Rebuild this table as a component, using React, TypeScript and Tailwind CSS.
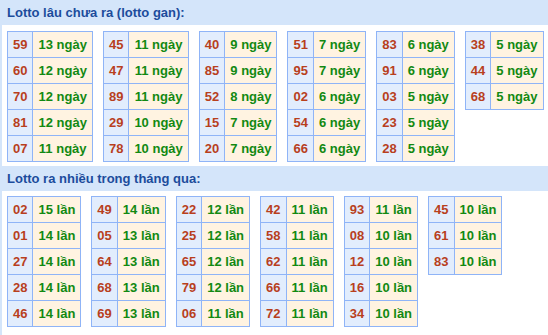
import React from 'react';

type Row = [string, string];

const ganTables: Row[][] = [
  [['59', '13'], ['60', '12'], ['70', '12'], ['81', '12'], ['07', '11']],
  [['45', '11'], ['47', '11'], ['89', '11'], ['29', '10'], ['78', '10']],
  [['40', '9'], ['85', '9'], ['52', '8'], ['15', '7'], ['20', '7']],
  [['51', '7'], ['95', '7'], ['02', '6'], ['54', '6'], ['66', '6']],
  [['83', '6'], ['91', '6'], ['03', '5'], ['23', '5'], ['28', '5']],
  [['38', '5'], ['44', '5'], ['68', '5']],
];

const hotTables: Row[][] = [
  [['02', '15'], ['01', '14'], ['27', '14'], ['28', '14'], ['46', '14']],
  [['49', '14'], ['05', '13'], ['64', '13'], ['68', '13'], ['69', '13']],
  [['22', '12'], ['25', '12'], ['65', '12'], ['79', '12'], ['06', '11']],
  [['42', '11'], ['58', '11'], ['62', '11'], ['66', '11'], ['72', '11']],
  [['93', '11'], ['08', '10'], ['12', '10'], ['16', '10'], ['34', '10']],
  [['45', '10'], ['61', '10'], ['83', '10']],
];

const StatTable: React.FC<{ rows: Row[]; unit: string }> = ({ rows, unit }) => (
  <div className="grid grid-cols-[auto_auto] border-l border-t border-[#8fb4f7]">
    {rows.map(([num, count], i) => (
      <React.Fragment key={i}>
        <div className="h-[26px] px-[5px] flex items-center justify-center border-r border-b border-[#8fb4f7] bg-[#e2edfd] text-[#b83f1d]">
          {num}
        </div>
        <div className="h-[26px] px-[5px] flex items-center justify-center border-r border-b border-[#8fb4f7] bg-[#fff3e1] text-[#128912]">
          {count} {unit}
        </div>
      </React.Fragment>
    ))}
  </div>
);

const Section: React.FC<{ title: string; tables: Row[][]; unit: string; top: string; bottom: string }> = ({
  title,
  tables,
  unit,
  top,
  bottom,
}) => (
  <div>
    <div className="h-[25px] pl-[5px] flex items-center bg-[#d4e5fa] text-[13px] font-bold text-[#1c4c9c]">
      {title}
    </div>
    <div className={`flex items-start gap-[10px] pl-[5px] ${top} ${bottom}`}>
      {tables.map((rows, i) => (
        <StatTable key={i} rows={rows} unit={unit} />
      ))}
    </div>
  </div>
);

export default function App() {
  return (
    <div
      className="w-[548px] h-[335px] overflow-hidden bg-white border-l-2 border-[#d4e5fa] text-[13px] font-bold"
      style={{ fontFamily: '"Liberation Sans", Arial, sans-serif' }}
    >
      <Section title="Lotto lâu chưa ra (lotto gan):" tables={ganTables} unit="ngày" top="pt-[6px]" bottom="pb-[4px]" />
      <Section title="Lotto ra nhiều trong tháng qua:" tables={hotTables} unit="lần" top="pt-[5px]" bottom="pb-[6px]" />
    </div>
  );
}
